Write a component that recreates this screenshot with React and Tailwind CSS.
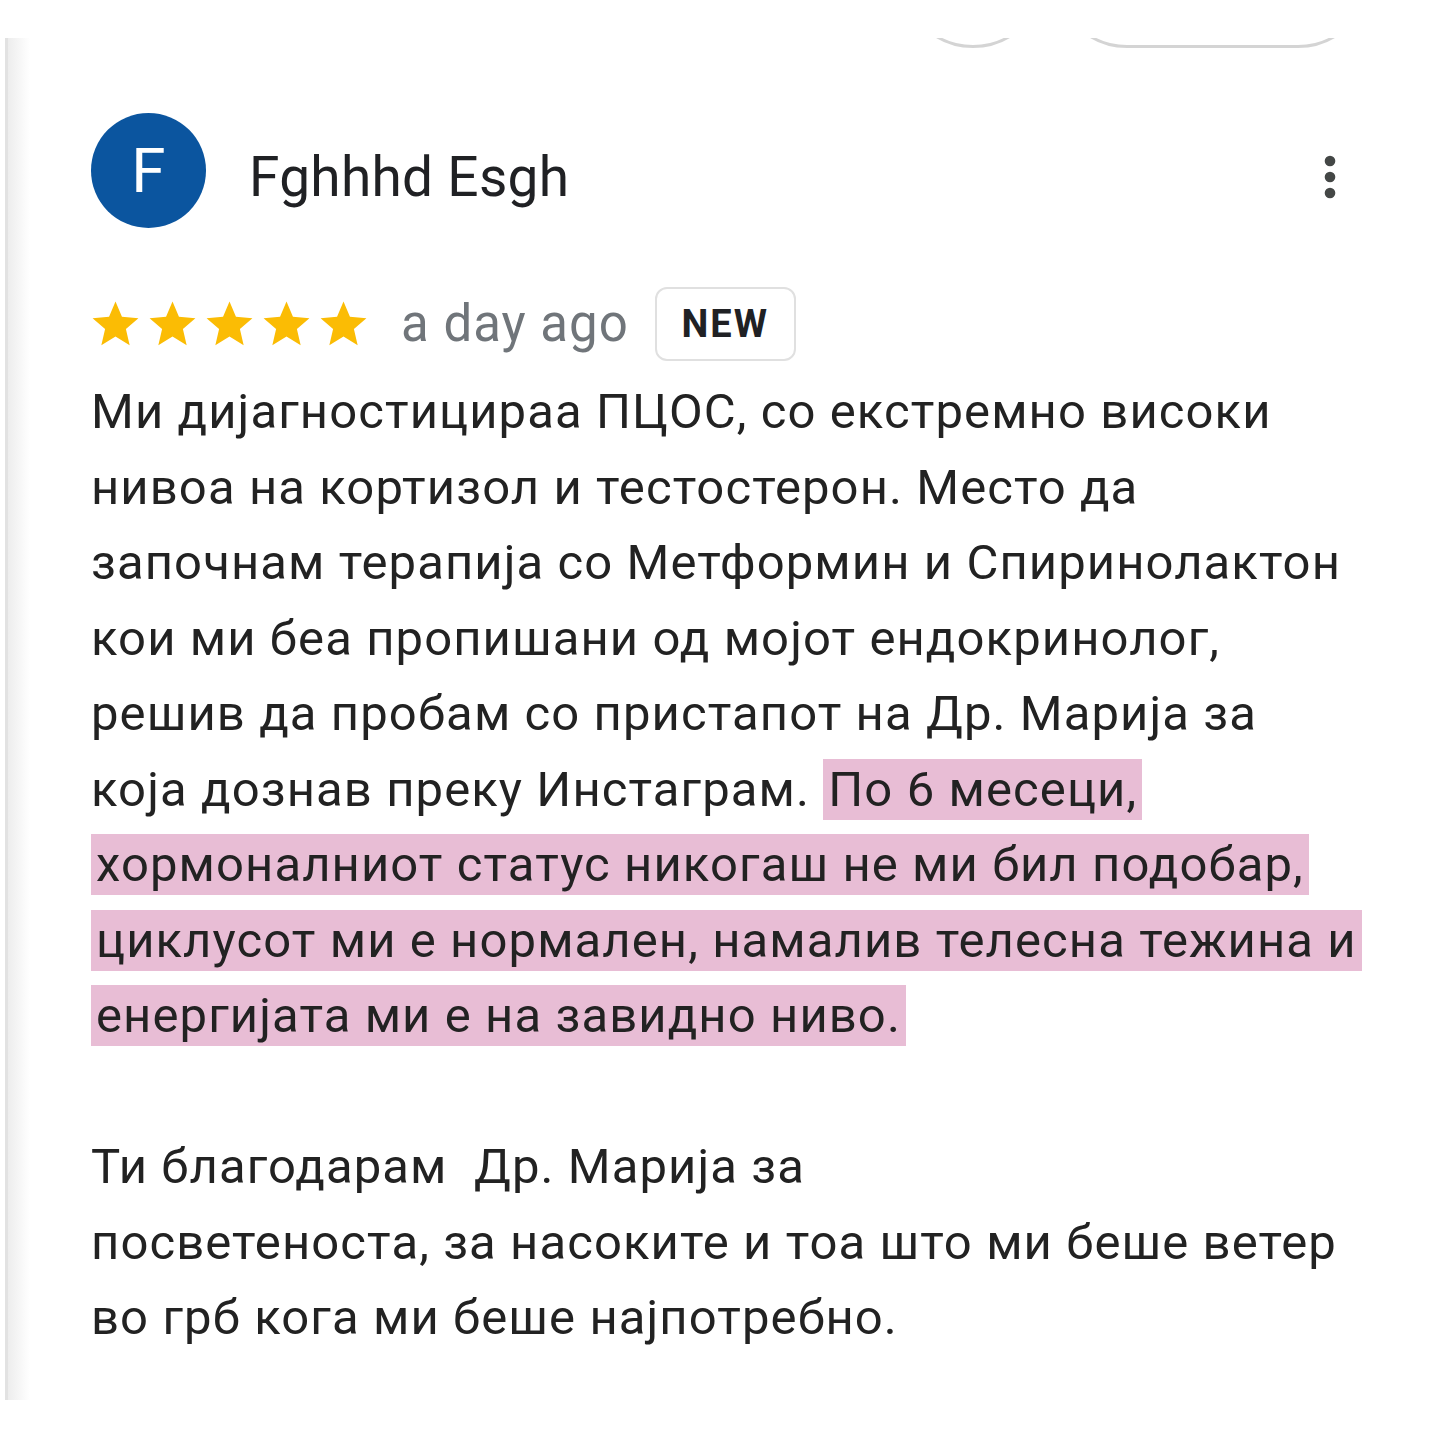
import React from "react";

const Star = () => (
  <svg viewBox="0 0 24 24" className="w-[55px] h-[55px] fill-[#fbbc04] shrink-0">
    <path d="M12 17.27L18.18 21l-1.64-7.03L22 9.24l-7.19-.61L12 2 9.19 8.63 2 9.24l5.46 4.73L5.82 21z" />
  </svg>
);

const MoreVert = () => (
  <svg viewBox="0 0 24 24" className="w-[64px] h-[64px] fill-[#444746]">
    <circle cx="12" cy="6" r="2" />
    <circle cx="12" cy="12" r="2" />
    <circle cx="12" cy="18" r="2" />
  </svg>
);

// Texto de la reseña con los saltos de línea tal como se ven
const review = {
  autor: "Fghhhd Esgh",
  inicial: "F",
  cuando: "a day ago",
  antes:
    "Ми дијагностицираа ПЦОС, со екстремно високи\nнивоа на кортизол и тестостерон. Место да\nзапочнам терапија со Метформин и Спиринолактон\nкои ми беа пропишани од мојот ендокринолог,\nрешив да пробам со пристапот на Др. Марија за\nкоја дознав преку Инстаграм. ",
  resaltado:
    "По 6 месеци,\nхормоналниот статус никогаш не ми бил подобар,\nциклусот ми е нормален, намалив телесна тежина и\nенергијата ми е на завидно ниво.",
  despues:
    "\n\nТи благодарам  Др. Марија за\nпосветеноста, за насоките и тоа што ми беше ветер\nво грб кога ми беше најпотребно.",
};

export default function App() {
  return (
    <div
      className="min-h-screen bg-white pt-[38px] pl-[5px]"
      style={{ fontFamily: "Roboto, 'Noto Sans', Arial, sans-serif" }}
    >
      <div className="flex h-[1362px] overflow-hidden">
        {/* borde izquierdo */}
        <div className="w-[25px] shrink-0 border-l-[3px] border-[#e2e2e2] bg-linear-to-r from-[#ededed] to-white" />

        <div className="flex-1 pl-[61px] pr-[10px]">
          {/* botones de la reseña anterior (cortados) */}
          <div className="flex h-[10px] items-end justify-end gap-[10px] pr-[60px]">
            <div className="w-[144px] h-[144px] shrink-0 rounded-full border-[3px] border-[#d4d4d4]" />
            <div className="w-[315px] h-[144px] shrink-0 rounded-full border-[3px] border-[#d4d4d4]" />
          </div>

          {/* Header */}
          <div className="mt-[65px] flex items-center">
            <div className="w-[115px] h-[115px] shrink-0 rounded-full bg-[#0b559f] text-white text-[62px] flex items-center justify-center">
              {review.inicial}
            </div>
            <div className="ml-[43px] mt-[14px] text-[55px] tracking-[0.3px] text-[#202124]">
              {review.autor}
            </div>
            <div className="ml-auto mr-[68px] mt-[12px]">
              <MoreVert />
            </div>
          </div>

          {/* Estrellas */}
          <div className="mt-[59px] h-[74px] flex items-center">
            <div className="flex gap-[2px] -ml-[3px]">
              <Star />
              <Star />
              <Star />
              <Star />
              <Star />
            </div>
            <span className="ml-[30px] text-[51px] tracking-[1px] text-[#70757a]">
              {review.cuando}
            </span>
            <span className="ml-[26px] w-[141px] h-[74px] flex items-center justify-center rounded-[12px] border-2 border-[#e0e0e0] text-[38px] font-bold tracking-[2px] text-[#202124]">
              NEW
            </span>
          </div>

          {/* Texto */}
          <p className="mt-[13px] text-[49px] leading-[75.5px] tracking-[1.1px] text-[#222222] whitespace-pre">
            {review.antes}
            <span className="bg-[#e8bdd5] px-[5px] py-[2px] box-decoration-clone">
              {review.resaltado}
            </span>
            {review.despues}
          </p>
        </div>
      </div>
    </div>
  );
}
